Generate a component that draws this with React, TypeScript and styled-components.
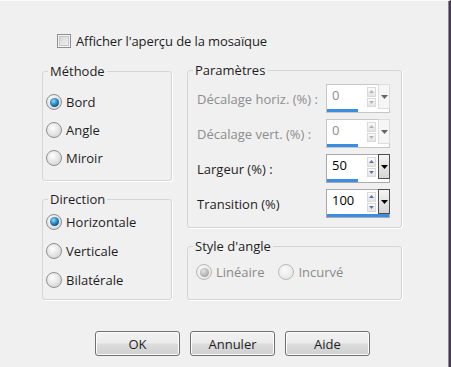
import React from 'react';
import styled, { createGlobalStyle } from 'styled-components';

const Global = createGlobalStyle`
  html, body { margin: 0; padding: 0; background: #f0f0f0; }
  body { font-family: "Open Sans", "Noto Sans", sans-serif; font-size: 13px; color: #1e1e1e; }
  #root { width: 451px; height: 367px; }
`;

const Window = styled.div`
  width: 451px;
  height: 367px;
  box-sizing: border-box;
  background: #f0f0f0;
  border-top: 1px solid #fbfbfb;
  border-right: 2px solid #463e50;
  box-shadow: inset -1px 0 0 #8a8394;
  display: flex;
  flex-direction: column;
  padding: 32px 0 0 42px;
`;

const TopRow = styled.label`
  display: flex;
  align-items: center;
  gap: 5px;
  margin-left: 15px;
  height: 16px;
  line-height: 16px;
  letter-spacing: -0.1px;
`;

const CheckBox = styled.span`
  width: 14px;
  height: 14px;
  box-sizing: border-box;
  border: 1px solid #8e8f8f;
  background: linear-gradient(135deg, #d2d2d2, #f4f4f4);
  box-shadow: inset 0 0 0 1px #f4f4f4, inset 0 0 0 2px #c4c6c8;
`;

const Columns = styled.div`
  display: flex;
  gap: 15px;
  margin-top: 14px;
`;

const Column = styled.div<{ $width: number; $shift?: number }>`
  display: flex;
  flex-direction: column;
  gap: 10px;
  width: ${p => p.$width}px;
  margin-top: ${p => p.$shift ?? 0}px;
`;

const Group = styled.fieldset<{ $pt: number; $pb: number }>`
  margin: 0;
  padding: ${p => p.$pt}px 3px ${p => p.$pb}px 3px;
  border: 1px solid #d5d5d5;
  border-radius: 3px;
  box-shadow: 1px 1px 0 #ffffff;
  min-inline-size: 0;
`;

const Legend = styled.legend`
  margin-left: 2px;
  padding: 0 2px;
  line-height: 16px;
  height: 16px;
  color: #1e1e1e;
`;

const RadioRow = styled.div<{ $h: number; $disabled?: boolean }>`
  display: flex;
  align-items: center;
  gap: 4px;
  height: ${p => p.$h}px;
  color: ${p => (p.$disabled ? '#8a8a8a' : '#1e1e1e')};
`;

const RadioCircle = styled.span<{ $checked?: boolean; $disabled?: boolean }>`
  width: 16px;
  height: 16px;
  border-radius: 50%;
  box-sizing: border-box;
  border: 1px solid ${p => (p.$disabled ? '#b8b8b8' : '#8e8f8f')};
  background: ${p =>
    p.$disabled
      ? 'radial-gradient(circle at 40% 35%, #fafafa, #e8e8e8 70%)'
      : 'radial-gradient(circle at 40% 35%, #ffffff, #e2e2e2 55%, #cdcdcd)'};
  display: flex;
  align-items: center;
  justify-content: center;
  flex: none;
  &::after {
    content: '';
    display: ${p => (p.$checked ? 'block' : 'none')};
    width: 9px;
    height: 9px;
    border-radius: 50%;
    background: ${p =>
      p.$disabled
        ? 'radial-gradient(circle at 40% 35%, #e4e4e4, #a9a9a9 70%, #8f8f8f)'
        : 'radial-gradient(circle at 40% 35%, #8fdcf7, #1f7db8 50%, #0a3558 90%)'};
  }
`;

const InlineRadios = styled.div`
  display: flex;
  gap: 14px;
  margin-left: 5px;
`;

const ParamRow = styled.div`
  display: flex;
  align-items: center;
  justify-content: space-between;
  height: 29px;
  padding: 0 8px 0 6px;
`;

const ParamRows = styled.div`
  display: flex;
  flex-direction: column;
  gap: 6px;
`;

const ParamLabel = styled.span<{ $disabled?: boolean }>`
  color: ${p => (p.$disabled ? '#8d8d8d' : '#1e1e1e')};
`;

const SpinBox = styled.div<{ $disabled?: boolean }>`
  width: 64px;
  height: 29px;
  box-sizing: border-box;
  border: 1px solid ${p => (p.$disabled ? '#c6c6c6' : '#a9a9a9')};
  background: #ffffff;
  display: flex;
  flex-direction: column;
`;

const SpinTop = styled.div`
  flex: 1;
  display: flex;
`;

const SpinField = styled.span<{ $disabled?: boolean }>`
  flex: 1;
  padding: 2px 0 0 5px;
  line-height: 16px;
  color: ${p => (p.$disabled ? '#8d8d8d' : '#000000')};
`;

const Arrows = styled.div`
  width: 9px;
  display: flex;
  flex-direction: column;
  gap: 1px;
  margin: 2px 2px 2px 0;
`;

const ArrowBtn = styled.span`
  flex: 1;
  display: flex;
  align-items: center;
  justify-content: center;
  background: linear-gradient(#fbfbfb, #e4e4e4);
  border: 1px solid #dadada;
  box-sizing: border-box;
`;

const DropBtn = styled.span<{ $disabled?: boolean }>`
  width: 12px;
  box-sizing: border-box;
  display: flex;
  align-items: center;
  justify-content: center;
  background: ${p => (p.$disabled ? '#f6f6f6' : 'linear-gradient(#f4f4f4, #d6d6d6)')};
  border: 1px solid ${p => (p.$disabled ? '#dcdcdc' : '#4e4e4e')};
  margin: -1px -1px 0 0;
`;

const Bar = styled.div`
  height: 3px;
  background: #3a8de1;
`;

const ButtonRow = styled.div`
  display: flex;
  gap: 10px;
  margin: 31px 0 0 53px;
`;

const Button = styled.button`
  width: 85px;
  height: 25px;
  box-sizing: border-box;
  border: 1px solid #707070;
  border-radius: 3px;
  background: linear-gradient(#f2f2f2 0%, #ebebeb 48%, #dddddd 52%, #cfcfcf 100%);
  box-shadow: inset 0 0 0 1px #fcfcfc;
  font-family: "Open Sans", "Noto Sans", sans-serif;
  font-size: 13px;
  color: #1e1e1e;
  padding: 0;
`;

const Tri = ({ dir, color, w = 7, h = 4 }: { dir: 'up' | 'down'; color: string; w?: number; h?: number }) => (
  <svg width={w} height={h} viewBox={`0 0 ${w} ${h}`}>
    {dir === 'up' ? (
      <polygon points={`0,${h} ${w},${h} ${w / 2},0`} fill={color} />
    ) : (
      <polygon points={`0,0 ${w},0 ${w / 2},${h}`} fill={color} />
    )}
  </svg>
);

type SpinProps = { value: string; disabled?: boolean; fill: number };

const Spin = ({ value, disabled, fill }: SpinProps) => {
  const arrowColor = disabled ? '#b4b4b4' : '#5a77a8';
  return (
    <SpinBox $disabled={disabled}>
      <SpinTop>
        <SpinField $disabled={disabled}>{value}</SpinField>
        <Arrows>
          <ArrowBtn>
            <Tri dir="up" color={arrowColor} w={5} h={3} />
          </ArrowBtn>
          <ArrowBtn>
            <Tri dir="down" color={arrowColor} w={5} h={3} />
          </ArrowBtn>
        </Arrows>
        <DropBtn $disabled={disabled}>
          <Tri dir="down" color={disabled ? '#666666' : '#000000'} />
        </DropBtn>
      </SpinTop>
      <Bar style={{ width: `${fill}%` }} />
    </SpinBox>
  );
};

const Radio = ({ label, checked, disabled, h }: { label: string; checked?: boolean; disabled?: boolean; h: number }) => (
  <RadioRow $h={h} $disabled={disabled}>
    <RadioCircle $checked={checked} $disabled={disabled} />
    <span>{label}</span>
  </RadioRow>
);

const params: { label: string; value: string; disabled?: boolean; fill: number }[] = [
  { label: 'Décalage horiz. (%) :', value: '0', disabled: true, fill: 50 },
  { label: 'Décalage vert. (%) :', value: '0', disabled: true, fill: 50 },
  { label: 'Largeur (%) :', value: '50', fill: 50 },
  { label: 'Transition (%)', value: '100', fill: 100 },
];

export default function App() {
  return (
    <>
      <Global />
      <Window>
        <TopRow>
          <CheckBox />
          <span>Afficher l'aperçu de la mosaïque</span>
        </TopRow>
        <Columns>
          <Column $width={130}>
            <Group $pt={9} $pb={8}>
              <Legend>Méthode</Legend>
              <Radio label="Bord" checked h={28} />
              <Radio label="Angle" h={28} />
              <Radio label="Miroir" h={28} />
            </Group>
            <Group $pt={0} $pb={5}>
              <Legend>Direction</Legend>
              <Radio label="Horizontale" checked h={29} />
              <Radio label="Verticale" h={29} />
              <Radio label="Bilatérale" h={29} />
            </Group>
          </Column>
          <Column $width={215} $shift={-1}>
            <Group $pt={6} $pb={9}>
              <Legend>Paramètres</Legend>
              <ParamRows>
                {params.map(p => (
                  <ParamRow key={p.label}>
                    <ParamLabel $disabled={p.disabled}>{p.label}</ParamLabel>
                    <Spin value={p.value} disabled={p.disabled} fill={p.fill} />
                  </ParamRow>
                ))}
              </ParamRows>
            </Group>
            <Group $pt={4} $pb={13}>
              <Legend>Style d'angle</Legend>
              <InlineRadios>
                <Radio label="Linéaire" checked disabled h={28} />
                <Radio label="Incurvé" disabled h={28} />
              </InlineRadios>
            </Group>
          </Column>
        </Columns>
        <ButtonRow>
          <Button>OK</Button>
          <Button>Annuler</Button>
          <Button>Aide</Button>
        </ButtonRow>
      </Window>
    </>
  );
}
